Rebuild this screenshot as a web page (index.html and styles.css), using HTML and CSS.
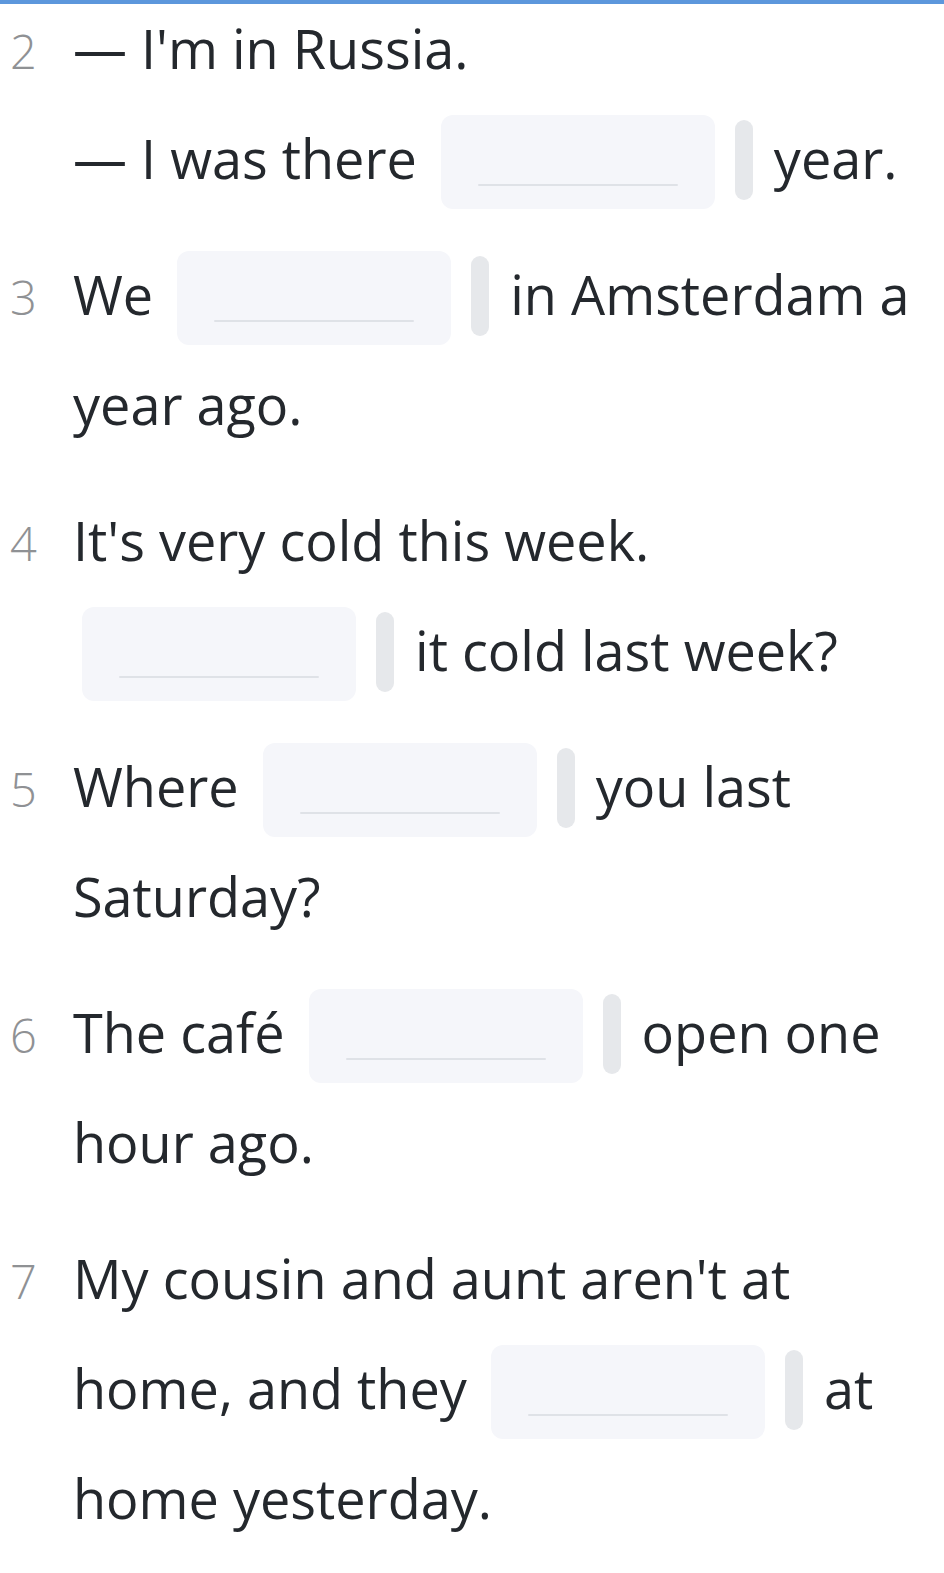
FILE: index.html
```html
<!DOCTYPE html>
<html lang="en">
<head>
<meta charset="utf-8">
<title>Exercise</title>
<link rel="stylesheet" href="styles.css">
</head>
<body>
<div class="topbar"></div>
<ol class="list">
  <li class="item">
    <span class="num">2</span>
    <p class="text">— I'm in Russia.<br>— I was there<span class="gap"><span class="box"><span class="line"></span></span><span class="pill"></span></span> year.</p>
  </li>
  <li class="item">
    <span class="num">3</span>
    <p class="text">We<span class="gap"><span class="box"><span class="line"></span></span><span class="pill"></span></span> in Amsterdam a year ago.</p>
  </li>
  <li class="item">
    <span class="num">4</span>
    <p class="text">It's very cold this week.<br><span class="gap first"><span class="box"><span class="line"></span></span><span class="pill"></span></span> it cold last week?</p>
  </li>
  <li class="item">
    <span class="num">5</span>
    <p class="text">Where<span class="gap"><span class="box"><span class="line"></span></span><span class="pill"></span></span> you last Saturday?</p>
  </li>
  <li class="item">
    <span class="num">6</span>
    <p class="text">The café<span class="gap"><span class="box"><span class="line"></span></span><span class="pill"></span></span> open one hour ago.</p>
  </li>
  <li class="item">
    <span class="num">7</span>
    <p class="text">My cousin and aunt aren't at home, and they<span class="gap"><span class="box"><span class="line"></span></span><span class="pill"></span></span> at home yesterday.</p>
  </li>
</ol>
</body>
</html>
```
FILE: styles.css
```css
html, body {
  margin: 0;
  padding: 0;
  background: #ffffff;
}
body {
  font-family: "Open Sans", "Noto Sans", sans-serif;
  color: #24282d;
}
.topbar {
  height: 4px;
  background: #5c97dc;
}
.list {
  list-style: none;
  margin: -11px 0 0 0;
  padding: 0 10px 0 10px;
  display: flex;
  flex-direction: column;
  gap: 26px;
}
.item {
  display: flex;
  align-items: baseline;
}
.num {
  flex: 0 0 63px;
  font-size: 47px;
  font-weight: 300;
  color: #8f9194;
  line-height: 110px;
}
.text {
  margin: 0;
  font-size: 54px;
  line-height: 110px;
  flex: 1 1 auto;
}
.gap {
  white-space: nowrap;
  margin-left: 24px;
}
.gap.first {
  margin-left: 9px;
}
.box {
  display: inline-block;
  width: 274px;
  height: 94px;
  background: #f5f6fa;
  border-radius: 12px;
  vertical-align: -30px;
  position: relative;
}
.line {
  position: absolute;
  left: 37px;
  width: 200px;
  top: 69px;
  height: 2px;
  background: #dfe2e7;
  border-radius: 1px;
}
.pill {
  display: inline-block;
  width: 18px;
  height: 80px;
  margin-left: 20px;
  margin-right: 7px;
  background: #e6e8eb;
  border-radius: 9px;
  vertical-align: -21px;
}
```
